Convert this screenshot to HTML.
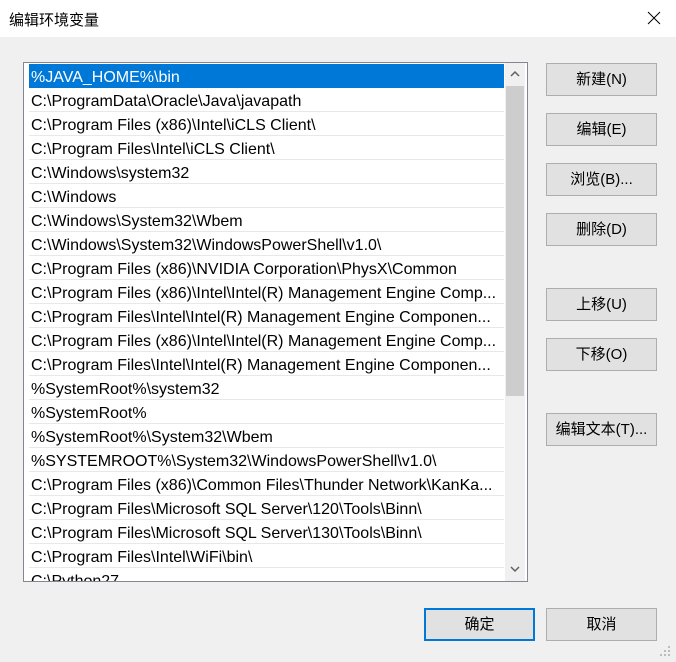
<!DOCTYPE html>
<html><head><meta charset="utf-8"><style>
*{margin:0;padding:0;box-sizing:border-box}
body{width:676px;height:662px;background:#f0f0f0;position:relative;overflow:hidden;font-family:"Liberation Sans","Noto Sans CJK SC",sans-serif;font-size:15px;color:#000}
.title{position:absolute;left:0;top:0;width:676px;height:37px;background:#fff}
.title span{position:absolute;left:9px;top:9px;font-size:15px}
.close{position:absolute;left:647px;top:11px;width:14px;height:14px}
.list{position:absolute;left:23px;top:62px;width:505px;height:520px;border:1px solid #828790;background:#fff;overflow:hidden}
.row{position:absolute;left:5px;width:475px;height:24px;line-height:23px;padding-top:2px;padding-left:2px;border-bottom:1px solid #e8e8e8;white-space:nowrap;overflow:hidden;font-size:16px}
.sel{background:#0078d7;color:#fff;border-bottom:none}
.sb{position:absolute;left:481px;top:0;width:20px;height:518px;background:#f0f0f0}
.thumb{position:absolute;left:1px;top:23px;width:18px;height:310px;background:#cdcdcd}
.btn{position:absolute;left:546px;width:111px;height:33px;border:1px solid #adadad;background:#e1e1e1;text-align:center;line-height:31px;font-size:15px}
</style></head><body>
<div class="title"><span>编辑环境变量</span>
<svg class="close" viewBox="0 0 14 14"><path d="M1 1L13 13M13 1L1 13" stroke="#000" stroke-width="1"/></svg></div>
<div class="list">
<div class="row sel" style="top:1px">%JAVA_HOME%\bin</div>
<div class="row" style="top:25px">C:\ProgramData\Oracle\Java\javapath</div>
<div class="row" style="top:49px">C:\Program Files (x86)\Intel\iCLS Client\</div>
<div class="row" style="top:73px">C:\Program Files\Intel\iCLS Client\</div>
<div class="row" style="top:97px">C:\Windows\system32</div>
<div class="row" style="top:121px">C:\Windows</div>
<div class="row" style="top:145px">C:\Windows\System32\Wbem</div>
<div class="row" style="top:169px">C:\Windows\System32\WindowsPowerShell\v1.0\</div>
<div class="row" style="top:193px">C:\Program Files (x86)\NVIDIA Corporation\PhysX\Common</div>
<div class="row" style="top:217px">C:\Program Files (x86)\Intel\Intel(R) Management Engine Comp...</div>
<div class="row" style="top:241px">C:\Program Files\Intel\Intel(R) Management Engine Componen...</div>
<div class="row" style="top:265px">C:\Program Files (x86)\Intel\Intel(R) Management Engine Comp...</div>
<div class="row" style="top:289px">C:\Program Files\Intel\Intel(R) Management Engine Componen...</div>
<div class="row" style="top:313px">%SystemRoot%\system32</div>
<div class="row" style="top:337px">%SystemRoot%</div>
<div class="row" style="top:361px">%SystemRoot%\System32\Wbem</div>
<div class="row" style="top:385px">%SYSTEMROOT%\System32\WindowsPowerShell\v1.0\</div>
<div class="row" style="top:409px">C:\Program Files (x86)\Common Files\Thunder Network\KanKa...</div>
<div class="row" style="top:433px">C:\Program Files\Microsoft SQL Server\120\Tools\Binn\</div>
<div class="row" style="top:457px">C:\Program Files\Microsoft SQL Server\130\Tools\Binn\</div>
<div class="row" style="top:481px">C:\Program Files\Intel\WiFi\bin\</div>
<div class="row" style="top:505px">C:\Python27</div>
<div class="sb"><div class="thumb"></div>
<svg style="position:absolute;left:5px;top:7px" width="10" height="7" viewBox="0 0 10 7"><path d="M1 6L5 2L9 6" stroke="#606060" stroke-width="1.5" fill="none"/></svg>
<svg style="position:absolute;left:5px;top:503px" width="10" height="7" viewBox="0 0 10 7"><path d="M1 1L5 5L9 1" stroke="#606060" stroke-width="1.5" fill="none"/></svg>
</div>
</div>
<div class="btn" style="top:63px">新建(N)</div>
<div class="btn" style="top:113px">编辑(E)</div>
<div class="btn" style="top:163px">浏览(B)...</div>
<div class="btn" style="top:213px">删除(D)</div>
<div class="btn" style="top:288px">上移(U)</div>
<div class="btn" style="top:338px">下移(O)</div>
<div class="btn" style="top:413px">编辑文本(T)...</div>
<div class="btn" style="left:424px;top:608px;border:2px solid #0078d7;line-height:29px">确定</div>
<div class="btn" style="top:608px">取消</div>
<svg style="position:absolute;left:660px;top:646px" width="12" height="12"><g fill="#bcbcbc"><rect x="8" y="0" width="2" height="2"/><rect x="4" y="4" width="2" height="2"/><rect x="8" y="4" width="2" height="2"/><rect x="0" y="8" width="2" height="2"/><rect x="4" y="8" width="2" height="2"/><rect x="8" y="8" width="2" height="2"/></g></svg>
</body></html>
